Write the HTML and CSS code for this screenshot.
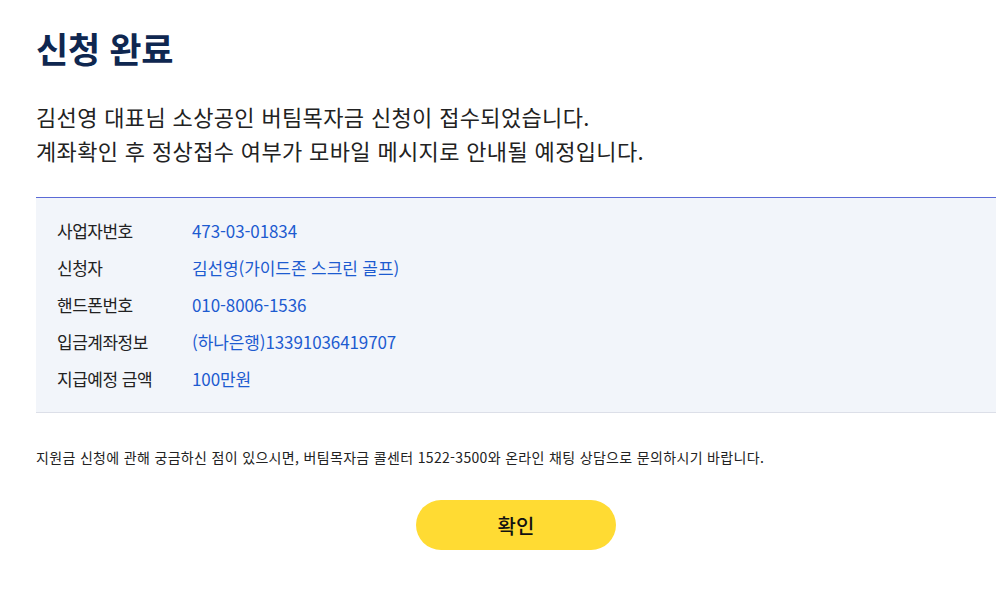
FILE: index.html
```html
<!DOCTYPE html>
<html lang="ko">
<head>
<meta charset="utf-8">
<link rel="stylesheet" href="styles.css">
</head>
<body>
<div class="page">
  <h1 class="title">신청 완료</h1>
  <p class="lead">김선영 대표님 소상공인 버팀목자금 신청이 접수되었습니다.<br>계좌확인 후 정상접수 여부가 모바일 메시지로 안내될 예정입니다.</p>
  <div class="panel">
    <dl class="info">
      <div class="row"><dt>사업자번호</dt><dd>473-03-01834</dd></div>
      <div class="row"><dt>신청자</dt><dd>김선영(가이드존 스크린 골프)</dd></div>
      <div class="row"><dt>핸드폰번호</dt><dd>010-8006-1536</dd></div>
      <div class="row"><dt>입금계좌정보</dt><dd>(하나은행)13391036419707</dd></div>
      <div class="row"><dt>지급예정 금액</dt><dd>100만원</dd></div>
    </dl>
  </div>
  <p class="note">지원금 신청에 관해 궁금하신 점이 있으시면, 버팀목자금 콜센터 1522-3500와 온라인 채팅 상담으로 문의하시기 바랍니다.</p>
  <div class="actions"><button class="btn">확인</button></div>
</div>
</body>
</html>
```
FILE: styles.css
```css
* { box-sizing: border-box; }
html, body { margin: 0; padding: 0; background: #fff; }
body { font-family: "Noto Sans CJK KR", "Noto Sans", sans-serif; color: #222; }
.page { padding: 24px 10px 0 36px; }
.title { margin: 0; font-size: 35px; font-weight: 700; color: #0f2750; line-height: 48px; letter-spacing: -0.3px; }
.lead { margin: 27px 0 0; font-size: 22px; line-height: 34px; color: #222; letter-spacing: 0.35px; }
.panel { margin-top: 30px; background: #f2f5fa; border-top: 1px solid #5b6ad6; border-bottom: 1px solid #dcdfe8; padding: 14px 21px 15px; }
.info { margin: 0; display: flex; flex-direction: column; }
.row { display: flex; height: 37px; align-items: center; font-size: 17px; }
.row dt { width: 135px; color: #222; letter-spacing: -0.5px; }
.row dd { margin: 0; color: #1d5bd0; letter-spacing: -0.1px; }
.note { margin: 34px 0 0; font-size: 14px; letter-spacing: 0.33px; color: #222; line-height: 20px; }
.actions { display: flex; justify-content: center; margin-top: 33px; }
.btn { width: 200px; height: 50px; border: 0; border-radius: 25px; background: #ffdb33; font-family: inherit; font-size: 20px; font-weight: 500; color: #111; }
```
